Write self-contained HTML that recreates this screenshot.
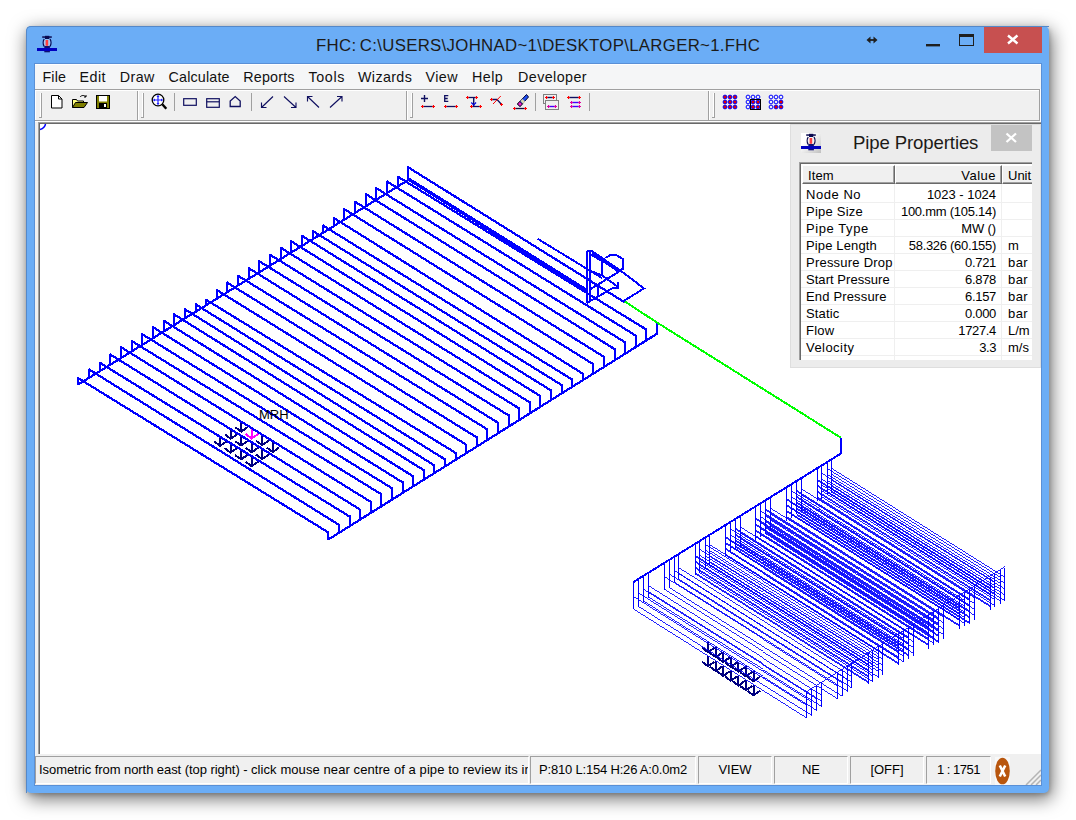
<!DOCTYPE html><html><head><meta charset="utf-8"><title>FHC</title><style>
html,body{margin:0;padding:0;background:#fff;}
body{width:1076px;height:820px;position:relative;overflow:hidden;font-family:"Liberation Sans",sans-serif;}
.abs{position:absolute;}
#win{position:absolute;left:26px;top:26px;width:1023px;height:767px;background:#6badf6;border-radius:5px;
 box-shadow:2px 5px 18px 1px rgba(0,0,0,.55), 1px 2px 4px rgba(0,0,0,.18);}
#winb{position:absolute;left:26px;top:26px;width:1022px;height:766px;border-left:1px solid #5588c8;border-top:1px solid #5588c8;border-radius:5px 0 0 0;}
#inb{position:absolute;left:34px;top:63px;width:1006px;height:721px;border:1px solid #5a90d6;}
#title{word-spacing:-1.5px;position:absolute;left:316px;top:34px;width:443px;height:24px;line-height:24px;font-size:16.8px;color:#1c1a18;white-space:nowrap;text-align:left;}
#client{position:absolute;left:35px;top:64px;width:1006px;height:721px;background:#f0f0f0;overflow:hidden;}
#menubar{position:absolute;left:0;top:0;width:1006px;height:25px;background:#f5f6f7;box-shadow:inset 0 1px 0 #fff;}
.mi{position:absolute;top:4px;height:18px;line-height:18px;font-size:14.3px;color:#111;white-space:nowrap;}
#tb{position:absolute;left:0;top:25px;width:1006px;height:32px;background:#f0f0f0;}
#draw{position:absolute;left:3px;top:58px;width:1003px;height:632px;background:#fff;border-left:1px solid #a0a0a0;border-top:1px solid #a0a0a0;box-sizing:border-box;}
#status{position:absolute;left:0;top:691px;width:1006px;height:30px;background:#f0f0f0;}
.sp{position:absolute;top:1px;height:28px;box-sizing:border-box;border-top:1px solid #a0a0a0;border-left:1px solid #a0a0a0;border-right:1px solid #fff;border-bottom:1px solid #fff;font-size:13px;line-height:26px;color:#000;white-space:nowrap;overflow:hidden;text-align:center;}
.r{font-size:13px;line-height:16px;height:16px;color:#000;white-space:nowrap;}</style></head><body><div id="win"></div><div id="winb"></div><div id="inb"></div><svg class="abs" style="left:37px;top:35px" width="20" height="20" viewBox="0 0 20 20"><rect x="5.200" y="1.300" width="9.600" height="1.500" fill="#0a0a50"/><rect x="8" y="0.800" width="4.300" height="3.200" fill="#0a0a50"/><rect x="7" y="4.300" width="6.200" height="7" fill="#a8c8f0"/><path d="M7.200 4c-1.300 2-1.300 5.500 0 7.500M13 4c1.300 2 1.300 5.500 0 7.500" stroke="#0a0a50" stroke-width="1.300" fill="none"/><rect x="8.600" y="5" width="2.600" height="5.800" fill="#ff4040"/><rect x="7.300" y="11" width="5.600" height="6.300" fill="#101070"/><rect x="0" y="13" width="20" height="3" fill="#0000c0"/></svg><div id="title" style="letter-spacing:0.310px;">FHC: C:\USERS\JOHNAD~1\DESKTOP\LARGER~1.FHC</div><svg class="abs" style="left:860px;top:27px" width="190" height="30" viewBox="860 27 190 30"><path d="M869 40h6" stroke="#1f1f1f" stroke-width="1.800" fill="none"/><path d="M866.500 40l4-3.400v6.800zM877.500 40l-4-3.400v6.800z" fill="#1f1f1f"/><rect x="926" y="44" width="14" height="2.4" fill="#1f1f1f"/><rect x="959.5" y="34.5" width="14" height="11" fill="none" stroke="#1f1f1f" stroke-width="1"/><rect x="959" y="34" width="15" height="3" fill="#1f1f1f"/><rect x="984" y="27" width="58" height="26" fill="#c75050"/><path d="M1008 35.5l9.5 8M1017.500 35.5l-9.500 8" stroke="#fff" stroke-width="2.4" fill="none"/></svg><div id="client"><div id="menubar"><span class="mi" id="m0" style="left:7.5px;letter-spacing:0.113px;">File</span><span class="mi" id="m1" style="left:44.6px;letter-spacing:0.415px;">Edit</span><span class="mi" id="m2" style="left:84.8px;letter-spacing:0.381px;">Draw</span><span class="mi" id="m3" style="left:133.6px;letter-spacing:0.166px;">Calculate</span><span class="mi" id="m4" style="left:208.3px;letter-spacing:0.191px;">Reports</span><span class="mi" id="m5" style="left:273.4px;letter-spacing:0.682px;">Tools</span><span class="mi" id="m6" style="left:323.0px;letter-spacing:0.366px;">Wizards</span><span class="mi" id="m7" style="left:390.5px;letter-spacing:0.416px;">View</span><span class="mi" id="m8" style="left:437.0px;letter-spacing:0.473px;">Help</span><span class="mi" id="m9" style="left:483.0px;letter-spacing:0.425px;">Developer</span></div><div id="tb"><svg class="abs" style="left:0;top:0" width="1006" height="33" viewBox="35 89 1006 33"><rect x="35" y="89" width="1006" height="1" fill="#a0a0a0"/><rect x="35" y="90" width="1006" height="1" fill="#fff"/><rect x="35" y="120" width="1006" height="1" fill="#a0a0a0"/><rect x="35" y="121" width="1006" height="1" fill="#fff"/><rect x="1039" y="89" width="1" height="32" fill="#a0a0a0"/><rect x="1040" y="89" width="1" height="33" fill="#fff"/><rect x="35" y="90" width="1" height="30" fill="#fff"/><rect x="137" y="91" width="1" height="29" fill="#a0a0a0"/><rect x="138" y="91" width="1" height="29" fill="#fff"/><rect x="406" y="91" width="1" height="29" fill="#a0a0a0"/><rect x="407" y="91" width="1" height="29" fill="#fff"/><rect x="708" y="91" width="1" height="29" fill="#a0a0a0"/><rect x="709" y="91" width="1" height="29" fill="#fff"/><rect x="40" y="93" width="1" height="24" fill="#fff"/><rect x="41" y="93" width="1" height="24" fill="#a0a0a0"/><rect x="39" y="117" width="3" height="1" fill="#a0a0a0"/><rect x="142" y="93" width="1" height="24" fill="#fff"/><rect x="143" y="93" width="1" height="24" fill="#a0a0a0"/><rect x="141" y="117" width="3" height="1" fill="#a0a0a0"/><rect x="411" y="93" width="1" height="24" fill="#fff"/><rect x="412" y="93" width="1" height="24" fill="#a0a0a0"/><rect x="410" y="117" width="3" height="1" fill="#a0a0a0"/><rect x="713" y="93" width="1" height="24" fill="#fff"/><rect x="714" y="93" width="1" height="24" fill="#a0a0a0"/><rect x="712" y="117" width="3" height="1" fill="#a0a0a0"/><rect x="174" y="93" width="1" height="18" fill="#a0a0a0"/><rect x="251" y="93" width="1" height="18" fill="#a0a0a0"/><rect x="535" y="93" width="1" height="18" fill="#a0a0a0"/><rect x="589" y="93" width="1" height="18" fill="#a0a0a0"/><path d="M51.500 95.500h7l3.500 3.500v9h-10.500z" fill="#fff" stroke="#000" stroke-width="1"/><path d="M58.500 95.500v3.500h3.500" fill="none" stroke="#000" stroke-width="1"/><path d="M72.500 107.500v-8h4l1 1.500h6v2" fill="#ffff80" stroke="#000" stroke-width="1"/><path d="M72.500 107.500l3-5h12l-3.500 5z" fill="#808000" stroke="#000" stroke-width="1"/><path d="M80 97c1.500-2 4.500-2 6 0m0 0v-2m0 2h-2" fill="none" stroke="#000" stroke-width="1"/><rect x="96.500" y="95.500" width="13" height="13" fill="#808000" stroke="#000" stroke-width="1"/><rect x="99" y="96" width="8" height="5.500" fill="#fff"/><rect x="99" y="103" width="8" height="5" fill="#000"/><rect x="104" y="104" width="2" height="3" fill="#fff"/><circle cx="158" cy="100" r="5.800" fill="#fff" stroke="#000" stroke-width="1.3"/><path d="M158 95.500v9M153.500 100h9" stroke="#2020ff" stroke-width="1.2"/><path d="M158 95l-1.500 2h3zM158 105l-1.500-2h3zM153 100l2-1.500v3zM163 100l-2-1.500v3z" fill="#2020ff"/><path d="M162.300 104.300l4 4.500" stroke="#000" stroke-width="2.400"/><rect x="183.700" y="98.700" width="12.600" height="6.600" fill="none" stroke="#101060" stroke-width="1.200"/><rect x="206.700" y="98.700" width="12.600" height="8.600" fill="none" stroke="#101060" stroke-width="1.200"/><path d="M206.700 101.800h12.600" stroke="#101060" stroke-width="1.200"/><path d="M230.200 106.500v-5.500l5-4.500l5 4.500v5.500z" fill="none" stroke="#101060" stroke-width="1.300"/><path d="M273 96.5L261.5 107.5M266.5 107.5H261.5V102.5" fill="none" stroke="#101060" stroke-width="1.150"/><path d="M284 96.5L296 107.5M291 107.5H296V102.5" fill="none" stroke="#101060" stroke-width="1.150"/><path d="M319 107.5L307.5 96.5M312.5 96.5H307.5V101.5" fill="none" stroke="#101060" stroke-width="1.150"/><path d="M330 107.5L342 96.5M337 96.5H342V101.5" fill="none" stroke="#101060" stroke-width="1.150"/><path d="M422.5 106.5H433.5" stroke="#101060" stroke-width="1.300"/><path d="M421.0 106.5h3M422.5 105.0v3M432.0 106.5h3M433.5 105.0v3" stroke="#ff0000" stroke-width="1"/><path d="M421 98.500h7M424.500 95v7" stroke="#101060" stroke-width="1.400"/><path d="M445.5 106.5H456.5" stroke="#101060" stroke-width="1.300"/><path d="M444.0 106.5h3M445.5 105.0v3M455.0 106.5h3M456.5 105.0v3" stroke="#ff0000" stroke-width="1"/><path d="M448.300 95.600h-3.600v5.800h3.600M444.700 98.500h3" fill="none" stroke="#101060" stroke-width="1.300"/><path d="M467.5 97.5H476.5" stroke="#101060" stroke-width="1.300"/><path d="M466.0 97.5h3M467.5 96.0v3M475.0 97.5h3M476.5 96.0v3" stroke="#ff0000" stroke-width="1"/><path d="M471.5 106.5H480.5" stroke="#101060" stroke-width="1.300"/><path d="M470.0 106.5h3M471.5 105.0v3M479.0 106.5h3M480.5 105.0v3" stroke="#ff0000" stroke-width="1"/><path d="M473.700 97.500v9" fill="none" stroke="#101060" stroke-width="1.400"/><path d="M471.300 102.500l2.400 2.500l2.400-2.500" fill="none" stroke="#0000e0" stroke-width="1.200"/><path d="M491.500 99.500h5.500l4.600 5" fill="none" stroke="#101060" stroke-width="1.300"/><path d="M500.800 96l-7.800 8" stroke="#ff0000" stroke-width="1"/><path d="M490 99.500h3M491.500 98v3M500 104.500h3M501.500 103v3" stroke="#ff0000" stroke-width="1"/><path d="M517.500 104l9-9.500l2 2.500l-8.500 9.500z" fill="#2050f0" stroke="#000030" stroke-width="1"/><path d="M517.500 104l2.300-2.500l2.600 2.600l-2.400 2.400z" fill="#f020d0" stroke="#000" stroke-width="0.800"/><path d="M520.500 101l2-2l2.500 2.500l-2 2.200z" fill="#d8d8b0"/><path d="M514.5 108.5H525.5" stroke="#101040" stroke-width="1.300"/><path d="M513.0 108.5h3M514.5 107.0v3M524.0 108.5h3M525.5 107.0v3" stroke="#ff0000" stroke-width="1"/><rect x="543.500" y="94.500" width="13" height="9" fill="#f0f0f0" stroke="#808080" stroke-width="1"/><rect x="545.500" y="100.500" width="13" height="9" fill="#f0f0f0" stroke="#808080" stroke-width="1"/><path d="M546.5 97.5H553.5" stroke="#101060" stroke-width="1.400"/><path d="M545.0 97.5h3M546.5 96.0v3M552.0 97.5h3M553.5 96.0v3" stroke="#ff0000" stroke-width="1"/><path d="M548.5 106.5H555.5" stroke="#4000ff" stroke-width="1.400"/><path d="M547.0 106.5h3M548.5 105.0v3M554.0 106.5h3M555.5 105.0v3" stroke="#e000a0" stroke-width="1"/><path d="M568.5 97.5H579.5" stroke="#101060" stroke-width="1.400"/><path d="M567.0 97.5h3M568.5 96.0v3M578.0 97.5h3M579.5 96.0v3" stroke="#ff0000" stroke-width="1"/><path d="M571.5 102.5H579.5" stroke="#4000ff" stroke-width="1.400"/><path d="M570.0 102.5h3M571.5 101.0v3M578.0 102.5h3M579.5 101.0v3" stroke="#e000a0" stroke-width="1"/><path d="M571.5 106.5H579.5" stroke="#4000ff" stroke-width="1.400"/><path d="M570.0 106.5h3M571.5 105.0v3M578.0 106.5h3M579.5 105.0v3" stroke="#e000a0" stroke-width="1"/><circle cx="725" cy="97" r="1.900" fill="#e00000" stroke="#0000ff" stroke-width="1"/><circle cx="730" cy="97" r="1.900" fill="#e00000" stroke="#0000ff" stroke-width="1"/><circle cx="735" cy="97" r="1.900" fill="#e00000" stroke="#0000ff" stroke-width="1"/><circle cx="725" cy="102" r="1.900" fill="#e00000" stroke="#0000ff" stroke-width="1"/><circle cx="730" cy="102" r="1.900" fill="#e00000" stroke="#0000ff" stroke-width="1"/><circle cx="735" cy="102" r="1.900" fill="#e00000" stroke="#0000ff" stroke-width="1"/><circle cx="725" cy="107" r="1.900" fill="#e00000" stroke="#0000ff" stroke-width="1"/><circle cx="730" cy="107" r="1.900" fill="#e00000" stroke="#0000ff" stroke-width="1"/><circle cx="735" cy="107" r="1.900" fill="#e00000" stroke="#0000ff" stroke-width="1"/><circle cx="748" cy="97" r="1.900" fill="#f0f0f0" stroke="#0000ff" stroke-width="1"/><circle cx="753" cy="97" r="1.900" fill="#f0f0f0" stroke="#0000ff" stroke-width="1"/><circle cx="758" cy="97" r="1.900" fill="#f0f0f0" stroke="#0000ff" stroke-width="1"/><circle cx="748" cy="102" r="1.900" fill="#f0f0f0" stroke="#0000ff" stroke-width="1"/><circle cx="753" cy="102" r="1.900" fill="#e00000" stroke="#0000ff" stroke-width="1"/><circle cx="758" cy="102" r="1.900" fill="#e00000" stroke="#0000ff" stroke-width="1"/><circle cx="748" cy="107" r="1.900" fill="#f0f0f0" stroke="#0000ff" stroke-width="1"/><circle cx="753" cy="107" r="1.900" fill="#e00000" stroke="#0000ff" stroke-width="1"/><circle cx="758" cy="107" r="1.900" fill="#e00000" stroke="#0000ff" stroke-width="1"/><rect x="750.500" y="99.500" width="10" height="10" fill="none" stroke="#000" stroke-width="1"/><circle cx="771" cy="97" r="1.900" fill="#f0f0f0" stroke="#0000ff" stroke-width="1"/><circle cx="776" cy="97" r="1.900" fill="#f0f0f0" stroke="#0000ff" stroke-width="1"/><circle cx="781" cy="97" r="1.900" fill="#f0f0f0" stroke="#0000ff" stroke-width="1"/><circle cx="771" cy="102" r="1.900" fill="#f0f0f0" stroke="#0000ff" stroke-width="1"/><circle cx="776" cy="102" r="1.900" fill="#f0f0f0" stroke="#0000ff" stroke-width="1"/><circle cx="781" cy="102" r="1.900" fill="#e00000" stroke="#0000ff" stroke-width="1"/><circle cx="771" cy="107" r="1.900" fill="#f0f0f0" stroke="#0000ff" stroke-width="1"/><circle cx="776" cy="107" r="1.900" fill="#e00000" stroke="#0000ff" stroke-width="1"/><circle cx="781" cy="107" r="1.900" fill="#e00000" stroke="#0000ff" stroke-width="1"/></svg></div><div id="draw"><div class="abs" style="left:0;top:0;width:1002px;height:630px;border-left:1px solid #696969;border-top:1px solid #696969"></div></div><div id="status"><div class="sp" style="left:0px;width:494px;text-align:left;padding-left:3px;"><span id="s0" style="letter-spacing:-0.064px">Isometric from north east (top right) - </span><span id="s0b" style="letter-spacing:0.082px">click mouse near centre of a pipe to review its information</span></div><div class="sp" style="left:495px;width:166px;"><span id="s1" style="letter-spacing:-0.192px;">P:810 L:154 H:26 A:0.0m2</span></div><div class="sp" style="left:663px;width:74px;"><span id="s2" style="">VIEW</span></div><div class="sp" style="left:739px;width:74px;"><span id="s3" style="">NE</span></div><div class="sp" style="left:815px;width:74px;"><span id="s4" style="">[OFF]</span></div><div class="sp" style="left:891px;width:65px;"><span id="s5" style="letter-spacing:-0.500px;">1 : 1751</span></div><svg class="abs" style="left:960px;top:2px" width="15" height="28" viewBox="0 0 15 28"><rect x="0" y="0" width="15" height="28" fill="#f8f8f8"/><ellipse cx="7.500" cy="14" rx="7.300" ry="13.300" fill="#b8560e"/><path d="M4.800 8.500l5.400 11M10.200 8.500l-5.400 11" stroke="#fff" stroke-width="2.600"/></svg><svg class="abs" style="left:990px;top:14px" width="16" height="16" viewBox="0 0 16 16"><path d="M1 16L16 1M6 16L16 6M11 16L16 11" stroke="#b4b4b4" stroke-width="1.500"/></svg></div></div><svg class="abs" style="left:40px;top:124px" width="1001" height="630" viewBox="40 124 1001 630" shape-rendering="crispEdges"><path d="M220.1 435.8V445.8M214.1 441.4L220.1 445.8L226.6 441.3" stroke="#000080" stroke-width="2" fill="none"/><path d="M230.6 442.6V452.6M224.6 448.2L230.6 452.6L237.1 448.1" stroke="#000080" stroke-width="2" fill="none"/><path d="M241.1 449.4V459.4M235.1 455.0L241.1 459.4L247.6 454.9" stroke="#000080" stroke-width="2" fill="none"/><path d="M251.6 456.2V466.2M245.6 461.8L251.6 466.2L258.1 461.7" stroke="#000080" stroke-width="2" fill="none"/><path d="M230.7 428.7V438.7M224.7 434.3L230.7 438.7L237.2 434.2" stroke="#000080" stroke-width="2" fill="none"/><path d="M241.2 435.5V445.5M235.2 441.1L241.2 445.5L247.7 441.0" stroke="#000080" stroke-width="2" fill="none"/><path d="M251.7 442.3V452.3M245.7 447.9L251.7 452.3L258.1 447.8" stroke="#000080" stroke-width="2" fill="none"/><path d="M262.1 449.1V459.1M256.1 454.7L262.1 459.1L268.6 454.6" stroke="#000080" stroke-width="2" fill="none"/><path d="M241.2 421.6V431.6M235.2 427.2L241.2 431.6L247.7 427.1" stroke="#000080" stroke-width="2" fill="none"/><path d="M251.7 428.4V438.4M245.7 434.0L251.7 438.4L258.2 433.9" stroke="#ff00ff" stroke-width="2" fill="none"/><path d="M262.2 435.2V445.2M256.2 440.8L262.2 445.2L268.7 440.7" stroke="#000080" stroke-width="2" fill="none"/><path d="M272.7 442.0V452.0M266.7 447.6L272.7 452.0L279.2 447.5" stroke="#000080" stroke-width="2" fill="none"/><path d="M708.1 642.3V652.3M702.1 647.9L708.1 652.3L714.6 647.8" stroke="#000080" stroke-width="2" fill="none"/><path d="M715.7 647.1V657.1M709.7 652.7L715.7 657.1L722.2 652.6" stroke="#000080" stroke-width="2" fill="none"/><path d="M723.2 652.0V662.0M717.2 657.6L723.2 662.0L729.7 657.5" stroke="#000080" stroke-width="2" fill="none"/><path d="M730.8 656.8V666.8M724.8 662.4L730.8 666.8L737.3 662.3" stroke="#000080" stroke-width="2" fill="none"/><path d="M738.4 661.6V671.6M732.4 667.2L738.4 671.6L744.9 667.1" stroke="#000080" stroke-width="2" fill="none"/><path d="M746.0 666.4V676.4M740.0 672.0L746.0 676.4L752.5 671.9" stroke="#000080" stroke-width="2" fill="none"/><path d="M753.5 671.3V681.3M747.5 676.9L753.5 681.3L760.0 676.8" stroke="#000080" stroke-width="2" fill="none"/><path d="M708.1 656.2V666.2M702.1 661.8L708.1 666.2L714.6 661.7" stroke="#000080" stroke-width="2" fill="none"/><path d="M715.7 661.0V671.0M709.7 666.6L715.7 671.0L722.2 666.5" stroke="#000080" stroke-width="2" fill="none"/><path d="M723.2 665.9V675.9M717.2 671.5L723.2 675.9L729.7 671.4" stroke="#000080" stroke-width="2" fill="none"/><path d="M730.8 670.7V680.7M724.8 676.3L730.8 680.7L737.3 676.2" stroke="#000080" stroke-width="2" fill="none"/><path d="M738.4 675.5V685.5M732.4 681.1L738.4 685.5L744.9 681.0" stroke="#000080" stroke-width="2" fill="none"/><path d="M746.0 680.3V690.3M740.0 685.9L746.0 690.3L752.5 685.8" stroke="#000080" stroke-width="2" fill="none"/><path d="M753.5 685.2V695.2M747.5 690.8L753.5 695.2L760.0 690.7" stroke="#000080" stroke-width="2" fill="none"/><path d="M817.7 479.5L990.7 588.3M817.7 480.5L990.7 589.3M817.7 485.4L990.7 594.2M817.7 486.4L990.7 595.2M817.7 491.3L990.7 600.1M817.7 492.3L990.7 601.1M817.7 497.2L990.7 606.0M817.7 498.2L990.7 607.0M821.8 473.2L994.8 582.0M821.8 479.1L994.8 587.9M821.8 485.0L994.8 593.8M821.8 490.9L994.8 599.7M821.8 496.8L994.8 605.6M827.8 468.8L1000.8 577.6M827.8 474.7L1000.8 583.5M827.8 480.6L1000.8 589.4M827.8 486.5L1000.8 595.3M827.8 492.4L1000.8 601.2M831.6 468.3L1004.6 577.1M831.6 474.2L1004.6 583.0M831.6 480.1L1004.6 588.9M831.6 486.0L1004.6 594.8M831.6 491.9L1004.6 600.7M786.7 498.8L959.7 607.6M786.7 499.8L959.7 608.6M786.7 504.7L959.7 613.5M786.7 505.7L959.7 614.5M786.7 510.6L959.7 619.4M786.7 511.6L959.7 620.4M786.7 516.5L959.7 625.3M786.7 517.5L959.7 626.3M791.5 491.5L964.5 600.3M791.5 497.4L964.5 606.2M791.5 503.3L964.5 612.1M791.5 509.2L964.5 618.0M791.5 515.1L964.5 623.9M796.6 490.3L969.6 599.1M796.6 491.3L969.6 600.1M796.6 496.2L969.6 605.0M796.6 497.2L969.6 606.0M796.6 502.1L969.6 610.9M796.6 503.1L969.6 611.9M796.6 508.0L969.6 616.8M796.6 509.0L969.6 617.8M796.6 513.9L969.6 622.7M796.6 514.9L969.6 623.7M801.4 488.8L974.4 597.6M801.4 494.7L974.4 603.5M801.4 500.6L974.4 609.4M801.4 506.5L974.4 615.3M755.7 518.1L928.7 626.9M755.7 519.1L928.7 627.9M755.7 524.0L928.7 632.8M755.7 525.0L928.7 633.8M755.7 529.9L928.7 638.7M755.7 530.9L928.7 639.7M755.7 535.8L928.7 644.6M755.7 536.8L928.7 645.6M760.7 510.9L933.7 619.7M760.7 516.8L933.7 625.6M760.7 522.7L933.7 631.5M760.7 528.6L933.7 637.4M760.7 534.5L933.7 643.3M765.5 509.5L938.5 618.3M765.5 510.5L938.5 619.3M765.5 515.4L938.5 624.2M765.5 516.4L938.5 625.2M765.5 521.3L938.5 630.1M765.5 522.3L938.5 631.1M765.5 527.2L938.5 636.0M765.5 528.2L938.5 637.0M765.5 533.1L938.5 641.9M765.5 534.1L938.5 642.9M770.6 508.2L943.6 617.0M770.6 514.1L943.6 622.9M770.6 520.0L943.6 628.8M770.6 525.9L943.6 634.7M725.6 536.7L898.6 645.5M725.6 537.7L898.6 646.5M725.6 542.5L898.6 651.3M725.6 543.5L898.6 652.3M725.6 548.4L898.6 657.2M725.6 549.4L898.6 658.2M725.6 554.2L898.6 663.0M725.6 555.2L898.6 664.0M730.5 529.6L903.5 638.4M730.5 535.4L903.5 644.2M730.5 541.3L903.5 650.1M730.5 547.1L903.5 655.9M730.5 553.0L903.5 661.8M735.4 528.2L908.4 637.0M735.4 529.2L908.4 638.0M735.4 534.1L908.4 642.9M735.4 535.1L908.4 643.9M735.4 539.9L908.4 648.7M735.4 540.9L908.4 649.7M735.4 545.8L908.4 654.6M735.4 546.8L908.4 655.6M740.6 527.1L913.6 635.9M740.6 533.0L913.6 641.8M740.6 538.8L913.6 647.6M740.6 544.7L913.6 653.5M695.4 555.5L868.4 664.3M695.4 556.5L868.4 665.3M695.4 561.3L868.4 670.1M695.4 562.3L868.4 671.1M695.4 567.2L868.4 676.0M695.4 568.2L868.4 677.0M695.4 573.0L868.4 681.8M695.4 574.0L868.4 682.8M699.9 549.5L872.9 658.3M699.9 555.4L872.9 664.2M699.9 561.2L872.9 670.0M699.9 567.1L872.9 675.9M699.9 572.9L872.9 681.7M705.5 545.0L878.5 653.8M705.5 550.8L878.5 659.6M705.5 556.7L878.5 665.5M705.5 562.5L878.5 671.3M705.5 568.4L878.5 677.2M709.6 544.6L882.6 653.4M709.6 550.5L882.6 659.3M709.6 556.3L882.6 665.1M709.6 562.2L882.6 671.0M664.5 577.3L837.5 686.1M664.5 589.9L837.5 698.7M669.2 574.0L842.2 682.8M669.2 587.5L842.2 696.3M674.6 570.6L847.6 679.4M674.6 582.3L847.6 691.1M678.6 567.6L851.6 676.4M678.6 573.5L851.6 682.3M678.6 579.0L851.6 687.8M633.6 596.5L806.6 705.3M633.6 609.1L806.6 717.9M638.6 593.0L811.6 701.8M638.6 606.5L811.6 715.3M643.5 589.9L816.5 698.7M643.5 601.6L816.5 710.4M648.5 586.3L821.5 695.1M648.5 592.2L821.5 701.0M648.5 597.7L821.5 706.5M806.5 691.1L1004.9 566.0" stroke="#0000ff" stroke-width="0.870" fill="none"/><path d="M817.5 467.7L817.5 501.2M990.5 576.5L990.5 610.0M821.5 465.1L821.5 498.6M994.5 573.9L994.5 607.4M827.5 461.4L827.5 494.9M1000.5 570.2L1000.5 603.7M831.5 459.0L831.5 492.5M1004.5 567.8L1004.5 601.3M786.5 487.0L786.5 520.5M959.5 595.8L959.5 629.3M791.5 484.0L791.5 517.5M964.5 592.8L964.5 626.3M796.5 480.8L796.5 514.3M969.5 589.6L969.5 623.1M801.5 477.8L801.5 511.3M974.5 586.6L974.5 620.1M755.5 506.3L755.5 539.8M928.5 615.1L928.5 648.6M760.5 503.1L760.5 536.6M933.5 611.9L933.5 645.4M765.5 500.2L765.5 533.7M938.5 609.0L938.5 642.5M770.5 497.0L770.5 530.5M943.5 605.8L943.5 639.3M725.5 525.0L725.5 556.4M898.5 633.8L898.5 665.2M730.5 521.9L730.5 553.3M903.5 630.7L903.5 662.1M735.5 518.9L735.5 550.3M908.5 627.7L908.5 659.1M740.5 515.6L740.5 547.0M913.5 624.4L913.5 655.8M695.5 543.8L695.5 575.2M868.5 652.6L868.5 684.0M699.5 541.0L699.5 572.9M872.5 649.8L872.5 681.7M705.5 537.5L705.5 568.9M878.5 646.3L878.5 677.7M709.5 534.9L709.5 566.3M882.5 643.7L882.5 675.1M664.5 563.0L664.5 589.9M837.5 671.8L837.5 698.7M669.5 560.1L669.5 587.5M842.5 668.9L842.5 696.3M674.5 556.7L674.5 582.3M847.5 665.5L847.5 691.1M678.5 554.2L678.5 579.0M851.5 663.0L851.5 687.8M633.5 582.2L633.5 609.1M806.5 691.0L806.5 717.9M638.5 579.1L638.5 606.5M811.5 687.9L811.5 715.3M643.5 576.0L643.5 601.6M816.5 684.8L816.5 710.4M648.5 572.9L648.5 597.7M821.5 681.7L821.5 706.5" stroke="#0000ff" stroke-width="1" fill="none"/><g transform="translate(0,0.9)"><path d="M78.5 383.5L408.3 179.0M328.3 538.6L657.1 332.8M77.7 376.9L328.4 531.6M88.7 368.3L339.4 524.2M99.7 361.8L350.4 516.1M109.7 353.2L360.4 508.9M120.7 346.1L371.4 501.4M131.7 340.1L381.4 493.4M141.7 333.0L392.4 487.6M152.7 326.1L403.4 482.0M163.7 319.7L413.4 475.6M173.7 313.2L424.4 469.7M184.7 308.2L434.4 464.5M195.7 303.5L445.4 458.7M205.7 298.6L456.4 452.5M216.7 289.0L466.4 443.9M226.7 281.4L477.4 436.9M237.7 274.6L487.4 428.5M248.7 267.2L498.4 422.1M258.7 260.0L509.4 415.0M269.7 253.6L519.4 407.7M280.7 246.8L530.4 401.9M290.7 240.1L540.4 395.2M301.7 234.7L551.4 389.8M312.7 230.1L562.4 384.6M322.7 224.4L572.4 378.8M333.7 217.0L583.4 373.2M343.7 207.9L593.4 363.4M354.7 200.6L604.4 356.3M365.7 193.1L615.4 348.7M375.7 186.9L625.4 341.6M386.7 180.4L636.4 335.1M397.7 175.7L646.4 328.7M407.7 166.1L624.0 301.0" stroke="#0000ff" stroke-width="2.250" fill="none"/><path d="M78.0 376.4L78.0 384.0M328.0 530.5L328.0 538.9M89.0 367.6L89.0 377.4M339.0 522.9L339.0 532.3M100.0 360.8L100.0 370.8M350.0 514.6L350.0 525.6M110.0 352.6L110.0 364.2M360.0 507.7L360.0 519.0M121.0 345.3L121.0 357.6M371.0 500.0L371.0 512.3M132.0 339.1L132.0 351.0M381.0 492.4L381.0 505.7M142.0 332.4L142.0 344.4M392.0 486.3L392.0 499.1M153.0 325.3L153.0 337.8M403.0 480.5L403.0 492.4M164.0 318.7L164.0 331.2M413.0 474.4L413.0 485.8M174.0 312.5L174.0 324.6M424.0 468.3L424.0 479.1M185.0 307.3L185.0 318.0M434.0 463.5L434.0 472.5M196.0 302.4L196.0 311.4M445.0 457.4L445.0 465.9M206.0 297.9L206.0 304.8M456.0 451.0L456.0 459.2M217.0 288.1L217.0 298.2M466.0 442.8L466.0 452.6M227.0 280.9L227.0 291.6M477.0 435.5L477.0 445.9M238.0 273.8L238.0 285.0M487.0 427.5L487.0 439.3M249.0 266.2L249.0 278.4M498.0 420.8L498.0 432.7M259.0 259.4L259.0 271.8M509.0 413.5L509.0 426.0M270.0 252.8L270.0 265.2M519.0 406.6L519.0 419.4M281.0 245.8L281.0 258.6M530.0 400.5L530.0 412.7M291.0 239.5L291.0 252.0M540.0 394.2L540.0 406.1M302.0 233.8L302.0 245.4M551.0 388.6L551.0 399.5M313.0 229.0L313.0 238.8M562.0 383.1L562.0 392.8M323.0 223.7L323.0 232.2M572.0 377.7L572.0 386.2M334.0 216.1L334.0 225.6M583.0 371.8L583.0 379.5M344.0 207.4L344.0 219.0M593.0 362.4L593.0 372.9M355.0 199.9L355.0 212.4M604.0 355.1L604.0 366.3M366.0 192.1L366.0 205.8M615.0 347.2L615.0 359.6M376.0 186.3L376.0 199.2M625.0 340.5L625.0 353.0M387.0 179.6L387.0 192.6M636.0 333.8L636.0 346.3M398.0 174.7L398.0 186.0M646.0 327.7L646.0 339.7M408.0 165.5L408.0 179.5M657.0 322.2L657.0 333.1" stroke="#0000ff" stroke-width="2" fill="none"/></g><path d="M624 301L657 322.500L841 437.800" stroke="#00ff00" stroke-width="2" fill="none"/><path d="M841 438V453.500L633.500 582" stroke="#0000ff" stroke-width="2" fill="none"/><path d="M408.300 178.900L587 290.600" stroke="#0000ff" stroke-width="3.400" fill="none"/><path d="M537.500 238.700L602 278" stroke="#0000ff" stroke-width="2" fill="none"/><path d="M586.800 251.400V303M590.200 250.500V300.500M586.800 251H593M592 251L620.500 270.700L644 288.400L623.800 301M592 253.500L619 272M602 259.300V275.300M590.500 254.300L602 261M590.500 271L602 275.300L618 287M618 282V288.800M613.700 288H618.800M605.300 258L611.200 254.700H615.800L623.400 259.500V268.600L619.600 270.700M620.500 270.700L591 288.800M613.700 287.500L586.800 303M597.800 285.800V297.200" stroke="#0000ff" stroke-width="2" fill="none"/><path d="M40 129.500Q45 128 45.500 124" stroke="#0000ff" stroke-width="1.500" fill="none" shape-rendering="auto"/><text x="259" y="418.700" font-family="Liberation Sans, sans-serif" font-size="13" fill="#000" shape-rendering="auto" style="text-rendering:auto">MRH</text></svg><div class="abs" id="pp" style="left:790px;top:124px;width:251px;height:244px;background:#ececec;box-sizing:border-box;border:1px solid #dedede;overflow:hidden"></div><div class="abs" style="left:801px;top:133px;width:20px;height:20px;background:linear-gradient(135deg,#ffffff 30%,#c0c0c0)"></div><svg class="abs" style="left:801px;top:133px" width="20" height="20" viewBox="0 0 20 20"><rect x="5.200" y="1.300" width="9.600" height="1.500" fill="#0a0a50"/><rect x="8" y="0.800" width="4.300" height="3.200" fill="#0a0a50"/><rect x="7" y="4.300" width="6.200" height="7" fill="#f4f4f4"/><path d="M7.200 4c-1.300 2-1.300 5.500 0 7.500M13 4c1.300 2 1.300 5.500 0 7.500" stroke="#0a0a50" stroke-width="1.300" fill="none"/><rect x="8.600" y="5" width="2.600" height="5.800" fill="#ff4040"/><rect x="7.300" y="11" width="5.600" height="6.300" fill="#101070"/><rect x="0" y="13" width="20" height="3" fill="#0000c0"/></svg><div class="abs" id="pptitle" style="left:853px;top:130px;height:26px;line-height:26px;font-size:18.6px;color:#1c1a18;white-space:nowrap;letter-spacing:-0.122px;">Pipe Properties</div><div class="abs" style="left:991px;top:125px;width:41px;height:26px;background:#c3c3c3"></div><svg class="abs" style="left:991px;top:125px" width="41" height="26"><path d="M15.500 8.500l9.500 8.500M25 8.500l-9.500 8.500" stroke="#fff" stroke-width="2.300" fill="none"/></svg><div class="abs" id="tbl" style="left:799px;top:162px;width:233px;height:198px;background:#fff;overflow:hidden;box-sizing:border-box;border-left:1px solid #a0a0a0;border-top:1px solid #a0a0a0;"><div class="abs" style="left:0;top:0;width:240px;height:198px;border-left:1px solid #696969;border-top:1px solid #696969"></div><div class="abs" style="left:2px;top:2px;width:93px;height:19px;box-sizing:border-box;background:#f0f0f0;border-left:1px solid #fff;border-top:1px solid #fff;border-right:1px solid #696969;border-bottom:1px solid #696969;box-shadow:inset -1px -1px 0 #a0a0a0;font-size:13px;line-height:19px;color:#000;text-align:left;padding:0 0 0 5px;white-space:nowrap;overflow:hidden"><span id="h0" style="letter-spacing:0.076px;">Item</span></div><div class="abs" style="left:95px;top:2px;width:107px;height:19px;box-sizing:border-box;background:#f0f0f0;border-left:1px solid #fff;border-top:1px solid #fff;border-right:1px solid #696969;border-bottom:1px solid #696969;box-shadow:inset -1px -1px 0 #a0a0a0;font-size:13px;line-height:19px;color:#000;text-align:right;padding:0 5px 0 0;white-space:nowrap;overflow:hidden"><span id="h1" style="letter-spacing:0.481px;">Value</span></div><div class="abs" style="left:202px;top:2px;width:60px;height:19px;box-sizing:border-box;background:#f0f0f0;border-left:1px solid #fff;border-top:1px solid #fff;border-right:1px solid #696969;border-bottom:1px solid #696969;box-shadow:inset -1px -1px 0 #a0a0a0;font-size:13px;line-height:19px;color:#000;text-align:left;padding:0 0 0 5px;white-space:nowrap;overflow:hidden"><span id="h2" style="">Unit</span></div><div class="abs r" style="left:6px;top:24px;"><span id="ra0" style="letter-spacing:0.541px;">Node No</span></div><div class="abs r" style="left:95px;top:24px;width:101px;text-align:right"><span id="rb0" style="letter-spacing:-0.028px;">1023 - 1024</span></div><div class="abs r" style="left:208px;top:24px;"><span id="rc0" style=""></span></div><div class="abs" style="left:1px;top:39px;width:240px;height:1px;background:#efefef"></div><div class="abs r" style="left:6px;top:41px;"><span id="ra1" style="letter-spacing:0.231px;">Pipe Size</span></div><div class="abs r" style="left:95px;top:41px;width:101px;text-align:right"><span id="rb1" style="letter-spacing:-0.260px;">100.mm (105.14)</span></div><div class="abs r" style="left:208px;top:41px;"><span id="rc1" style=""></span></div><div class="abs" style="left:1px;top:56px;width:240px;height:1px;background:#efefef"></div><div class="abs r" style="left:6px;top:58px;"><span id="ra2" style="letter-spacing:0.578px;">Pipe Type</span></div><div class="abs r" style="left:95px;top:58px;width:101px;text-align:right"><span id="rb2" style="letter-spacing:-0.135px;">MW ()</span></div><div class="abs r" style="left:208px;top:58px;"><span id="rc2" style=""></span></div><div class="abs" style="left:1px;top:73px;width:240px;height:1px;background:#efefef"></div><div class="abs r" style="left:6px;top:75px;"><span id="ra3" style="letter-spacing:0.136px;">Pipe Length</span></div><div class="abs r" style="left:95px;top:75px;width:101px;text-align:right"><span id="rb3" style="letter-spacing:-0.306px;">58.326 (60.155)</span></div><div class="abs r" style="left:208px;top:75px;"><span id="rc3" style="letter-spacing:0.356px;">m</span></div><div class="abs" style="left:1px;top:90px;width:240px;height:1px;background:#efefef"></div><div class="abs r" style="left:6px;top:92px;"><span id="ra4" style="letter-spacing:0.222px;">Pressure Drop</span></div><div class="abs r" style="left:95px;top:92px;width:101px;text-align:right"><span id="rb4" style="letter-spacing:-0.309px;">0.721</span></div><div class="abs r" style="left:208px;top:92px;"><span id="rc4" style="letter-spacing:0.401px;">bar</span></div><div class="abs" style="left:1px;top:107px;width:240px;height:1px;background:#efefef"></div><div class="abs r" style="left:6px;top:109px;"><span id="ra5" style="letter-spacing:0.043px;">Start Pressure</span></div><div class="abs r" style="left:95px;top:109px;width:101px;text-align:right"><span id="rb5" style="letter-spacing:-0.309px;">6.878</span></div><div class="abs r" style="left:208px;top:109px;"><span id="rc5" style="letter-spacing:0.401px;">bar</span></div><div class="abs" style="left:1px;top:124px;width:240px;height:1px;background:#efefef"></div><div class="abs r" style="left:6px;top:126px;"><span id="ra6" style="letter-spacing:0.161px;">End Pressure</span></div><div class="abs r" style="left:95px;top:126px;width:101px;text-align:right"><span id="rb6" style="letter-spacing:-0.309px;">6.157</span></div><div class="abs r" style="left:208px;top:126px;"><span id="rc6" style="letter-spacing:0.401px;">bar</span></div><div class="abs" style="left:1px;top:141px;width:240px;height:1px;background:#efefef"></div><div class="abs r" style="left:6px;top:143px;"><span id="ra7" style="letter-spacing:0.131px;">Static</span></div><div class="abs r" style="left:95px;top:143px;width:101px;text-align:right"><span id="rb7" style="letter-spacing:-0.309px;">0.000</span></div><div class="abs r" style="left:208px;top:143px;"><span id="rc7" style="letter-spacing:0.401px;">bar</span></div><div class="abs" style="left:1px;top:158px;width:240px;height:1px;background:#efefef"></div><div class="abs r" style="left:6px;top:160px;"><span id="ra8" style="letter-spacing:0.237px;">Flow</span></div><div class="abs r" style="left:95px;top:160px;width:101px;text-align:right"><span id="rb8" style="letter-spacing:-0.344px;">1727.4</span></div><div class="abs r" style="left:208px;top:160px;"><span id="rc8" style="letter-spacing:-0.024px;">L/m</span></div><div class="abs" style="left:1px;top:175px;width:240px;height:1px;background:#efefef"></div><div class="abs r" style="left:6px;top:177px;"><span id="ra9" style="letter-spacing:0.448px;">Velocity</span></div><div class="abs r" style="left:95px;top:177px;width:101px;text-align:right"><span id="rb9" style="letter-spacing:-0.426px;">3.3</span></div><div class="abs r" style="left:208px;top:177px;"><span id="rc9" style="letter-spacing:-0.018px;">m/s</span></div><div class="abs" style="left:1px;top:192px;width:240px;height:1px;background:#efefef"></div><div class="abs" style="left:94px;top:21px;width:1px;height:180px;background:#efefef"></div><div class="abs" style="left:201px;top:21px;width:1px;height:180px;background:#efefef"></div></div></body></html>
